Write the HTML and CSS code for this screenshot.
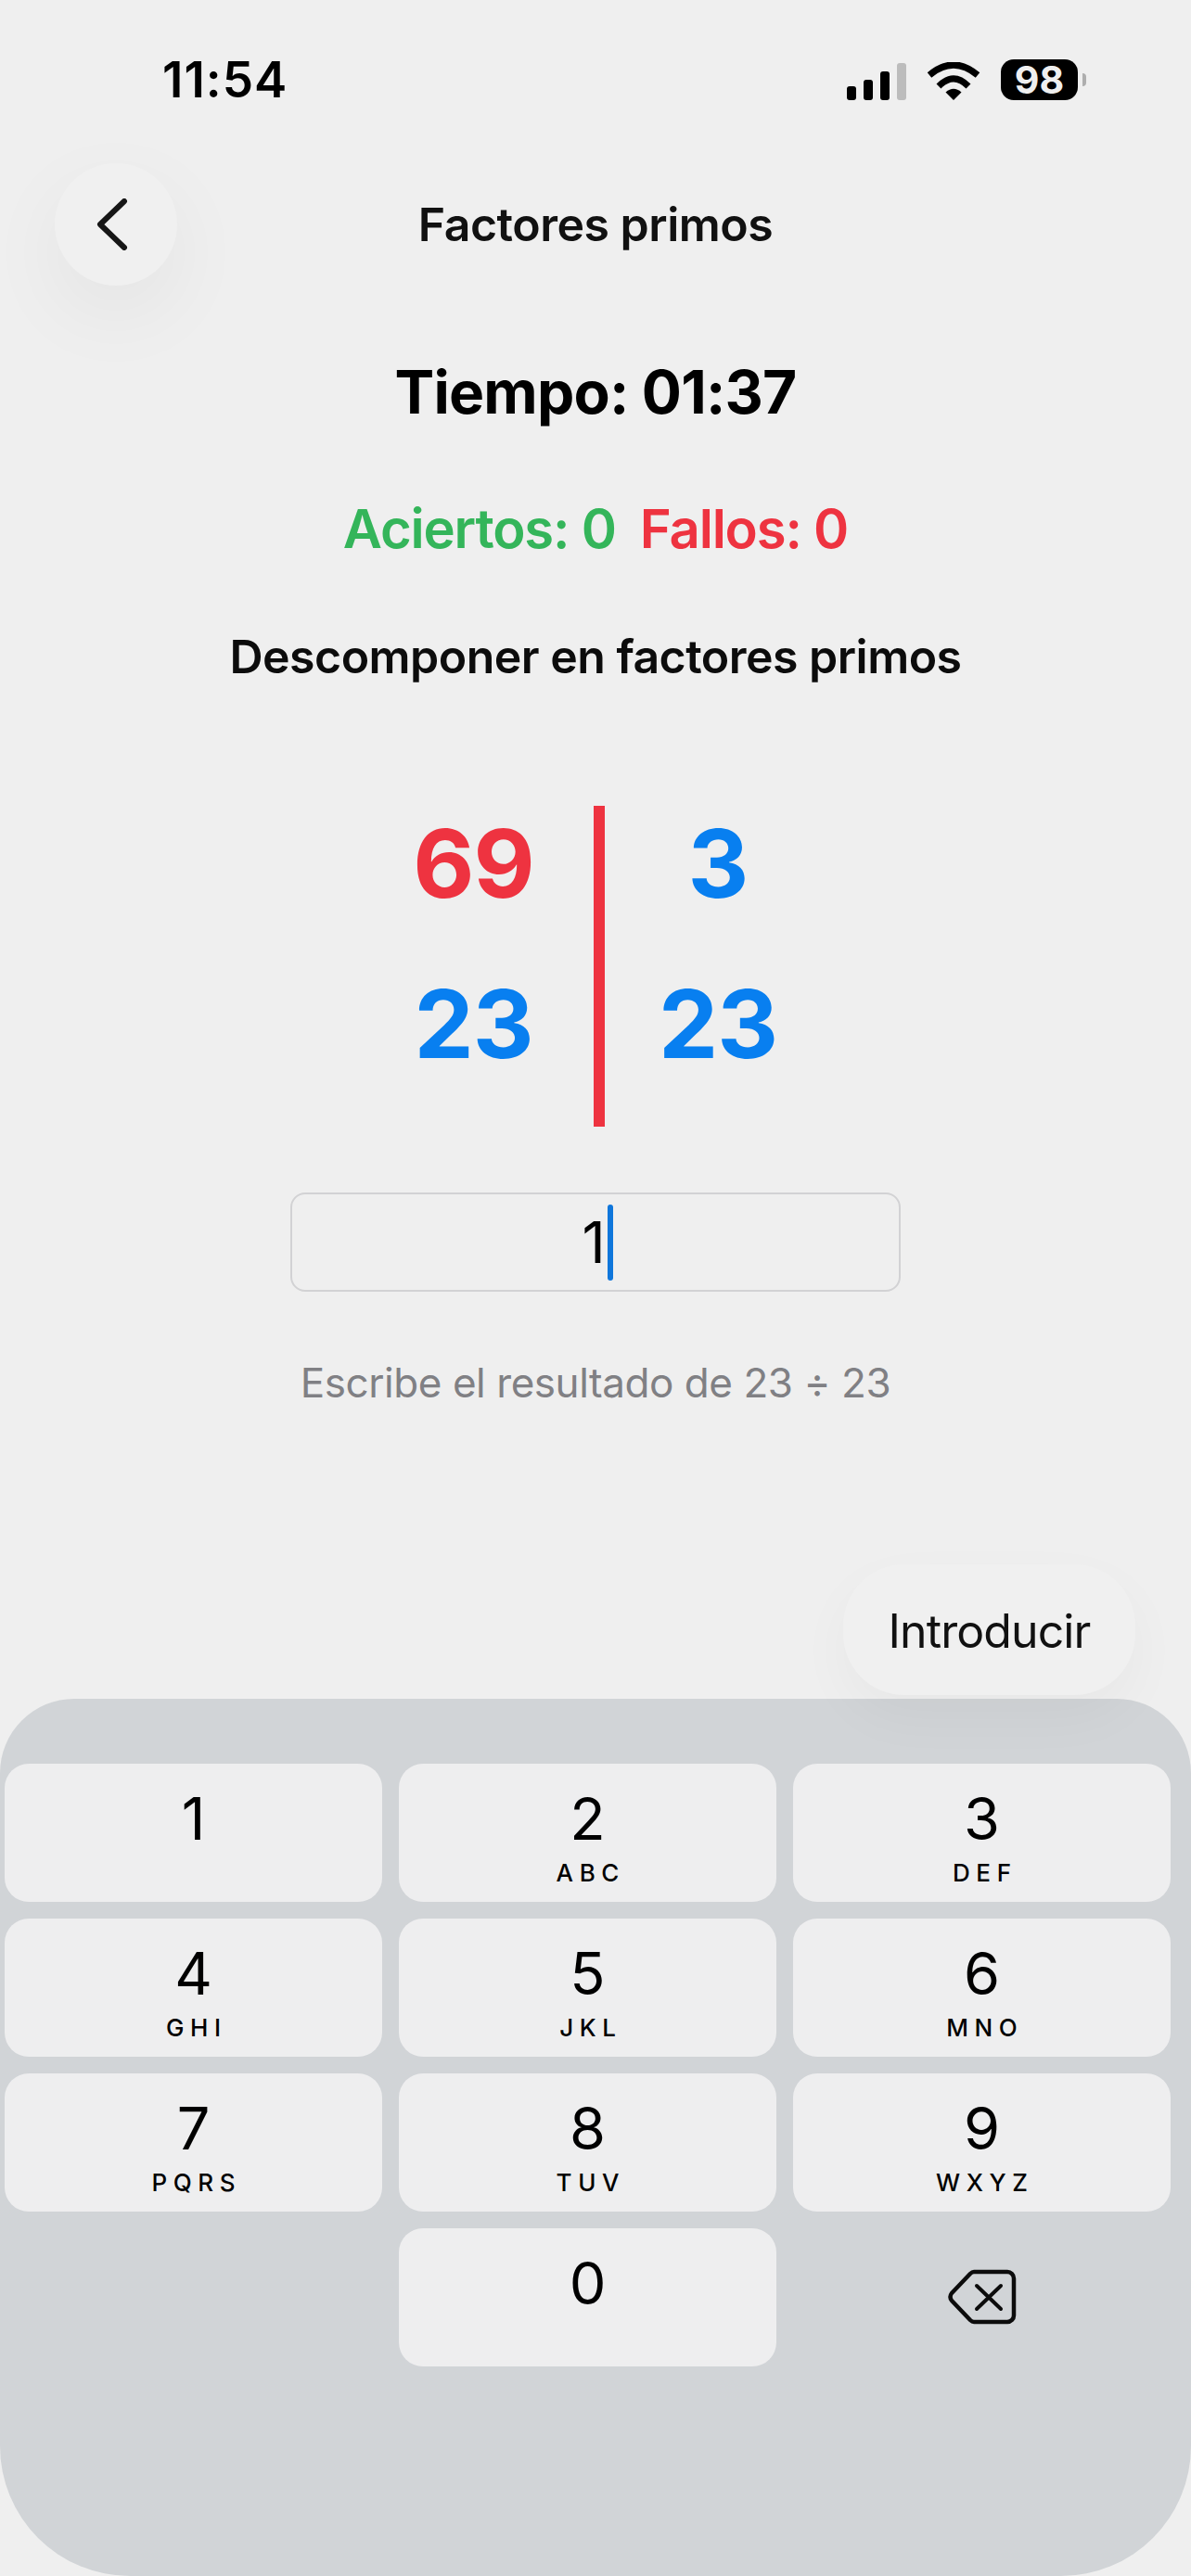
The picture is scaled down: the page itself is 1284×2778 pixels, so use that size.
FILE: index.html
```html
<!DOCTYPE html>
<html lang="es">
<head>
<meta charset="utf-8">
<title>Factores primos</title>
<link rel="stylesheet" href="styles.css">
</head>
<body>
<div class="page">
  <header class="status">
    <span class="clock">11:54</span>
    <div class="status-icons">
      <svg class="signal" width="64" height="40" viewBox="0 0 64 40"><rect x="0" y="25" width="10" height="15" rx="3" fill="#000"/><rect x="18" y="18" width="10" height="22" rx="3" fill="#000"/><rect x="36" y="9" width="10" height="31" rx="3" fill="#000"/><rect x="54" y="0" width="10" height="40" rx="3" fill="#bcbcbc"/></svg>
      <svg class="wifi" width="58" height="41" viewBox="0 0 58 41"><path d="M3 14Q29 -8 55 14" fill="none" stroke="#000" stroke-width="7"/><path d="M13 26Q29 10 45 26" fill="none" stroke="#000" stroke-width="7"/><path d="M29 41L20.5 32.5Q29 25 37.5 32.5Z" fill="#000"/></svg>
      <div class="battery-wrap">
        <span class="battery">98</span>
        <span class="battery-tip"></span>
      </div>
    </div>
  </header>

  <nav class="nav">
    <button class="back" type="button" aria-label="Volver">
      <svg width="34" height="56" viewBox="0 0 34 56"><path d="M30 3L4 28L30 53" fill="none" stroke="#161616" stroke-width="6" stroke-linecap="round" stroke-linejoin="round"/></svg>
    </button>
    <h1 class="title">Factores primos</h1>
  </nav>

  <p class="timer">Tiempo: 01:37</p>
  <p class="score"><span class="ok">Aciertos: 0</span><span class="bad">Fallos: 0</span></p>
  <p class="task">Descomponer en factores primos</p>

  <div class="division">
    <div class="cell red">69</div>
    <div class="bar"></div>
    <div class="cell blue">3</div>
    <div class="cell blue">23</div>
    <div class="cell blue">23</div>
  </div>

  <div class="field"><span class="value">1</span><span class="caret"></span></div>
  <p class="hint">Escribe el resultado de 23 ÷ 23</p>

  <div class="action-row"><button class="enter" type="button">Introducir</button></div>

  <section class="keyboard">
    <div class="key"><span class="digit">1</span></div>
    <div class="key"><span class="digit">2</span><span class="letters">ABC</span></div>
    <div class="key"><span class="digit">3</span><span class="letters">DEF</span></div>
    <div class="key"><span class="digit">4</span><span class="letters">GHI</span></div>
    <div class="key"><span class="digit">5</span><span class="letters">JKL</span></div>
    <div class="key"><span class="digit">6</span><span class="letters">MNO</span></div>
    <div class="key"><span class="digit">7</span><span class="letters">PQRS</span></div>
    <div class="key"><span class="digit">8</span><span class="letters">TUV</span></div>
    <div class="key"><span class="digit">9</span><span class="letters">WXYZ</span></div>
    <div class="key-blank"></div>
    <div class="key"><span class="digit">0</span></div>
    <div class="key-blank key-delete">
      <svg width="74" height="60" viewBox="0 0 74 60"><path d="M28 3H64A7 7 0 0 1 71 10V50A7 7 0 0 1 64 57H28Q26 57 24 55L4 34Q1 30 4 26L24 5Q26 3 28 3Z" fill="none" stroke="#0c0c0c" stroke-width="4.5" stroke-linejoin="round"/><path d="M31 18L57 43M57 18L31 43" fill="none" stroke="#0c0c0c" stroke-width="4" stroke-linecap="round"/></svg>
    </div>
  </section>
</div>
</body>
</html>
```
FILE: styles.css
```css
* { box-sizing: border-box; }
html, body { margin: 0; padding: 0; }
body { background: #efefef; font-family: Inter, "Liberation Sans", sans-serif; color: #000; }
p, h1 { margin: 0; }
button { font-family: inherit; border: 0; padding: 0; }

.page { width: 1284px; height: 2778px; display: flex; flex-direction: column; overflow: hidden; }

.status { height: 44px; margin-top: 64px; padding: 0 113px 0 175px; display: flex; justify-content: space-between; align-items: center; }
.clock { font-size: 53px; font-weight: 600; line-height: 44px; letter-spacing: 1px; }
.status-icons { display: flex; align-items: flex-end; gap: 22px; }
.signal { display: block; }
.wifi { display: block; }
.battery-wrap { display: flex; align-items: center; gap: 5px; }
.battery { width: 83px; height: 44px; border-radius: 14px; background: #000; color: #efefef; font-size: 41px; font-weight: 700; line-height: 44px; text-align: center; }
.battery-tip { width: 4px; height: 14px; background: #aeaeae; border-radius: 0 4px 4px 0; }

.nav { margin-top: 68px; height: 132px; padding: 0 59px; display: grid; grid-template-columns: 1fr auto 1fr; align-items: center; }
.back { width: 132px; height: 132px; border-radius: 50%; background: #f0f0f0; box-shadow: 0 30px 90px rgba(0, 0, 0, 0.05); display: flex; align-items: center; justify-content: center; padding-right: 9px; }
.title { font-size: 50px; font-weight: 600; line-height: 60px; color: #111; letter-spacing: -0.5px; }

.timer { margin-top: 75px; font-size: 64px; font-weight: 700; line-height: 80px; text-align: center; letter-spacing: -0.8px; }
.score { margin-top: 72px; height: 70px; display: flex; justify-content: center; gap: 26px; font-size: 58px; font-weight: 600; line-height: 70px; letter-spacing: -1.2px; }
.ok { color: #34b55a; }
.bad { color: #ee3340; }
.task { margin-top: 73px; font-size: 50px; font-weight: 600; line-height: 60px; text-align: center; color: #0c0c0c; letter-spacing: -0.52px; }

.division { margin-top: 131px; width: 515px; margin-left: 381px; display: grid; grid-template-columns: 259px 12px 244px; grid-template-rows: 173px 173px; }
.cell { display: flex; align-items: center; justify-content: center; font-size: 102px; font-weight: 700; line-height: 1; padding-bottom: 50px; letter-spacing: -1px; }
.red { color: #ee3340; }
.blue { color: #087ff0; }
.bar { grid-column: 2; grid-row: 1 / span 2; background: #ee3340; }

.field { margin: 71px 0 0 313px; width: 658px; height: 107px; border: 2px solid #d2d2d4; border-radius: 16px; display: flex; align-items: center; justify-content: center; gap: 2px; padding-left: 4px; }
.value { font-size: 62px; font-weight: 400; line-height: 62px; }
.caret { width: 6px; height: 82px; background: #0f76db; border-radius: 3px; }

.hint { margin-top: 70px; font-size: 44px; line-height: 56px; text-align: center; color: #808084; letter-spacing: -0.45px; }

.action-row { margin-top: 168px; padding-right: 60px; display: flex; justify-content: flex-end; position: relative; z-index: 1; }
.enter { width: 315px; height: 141px; padding-top: 2px; border-radius: 66px; background: #f0f0f0; color: #111; font-size: 50px; font-weight: 400; letter-spacing: -0.9px; box-shadow: 0 22px 60px rgba(0, 0, 0, 0.035); }

.keyboard { margin-top: 4px; height: 946px; padding: 70px 22px 0 5px; background: #d1d4d7; border-radius: 80px 80px 140px 140px; display: grid; grid-template-columns: repeat(3, 1fr); grid-auto-rows: 149px; gap: 18px; }
.key { background: #eeeeef; border-radius: 26px; padding-top: 27px; display: flex; flex-direction: column; align-items: center; }
.digit { font-size: 63px; font-weight: 400; line-height: 64px; }
.letters { margin-top: 12px; font-size: 26px; font-weight: 500; line-height: 30px; letter-spacing: 6.6px; margin-right: -6.6px; }
.key-delete { display: flex; align-items: center; justify-content: center; padding-bottom: 2px; }
```
